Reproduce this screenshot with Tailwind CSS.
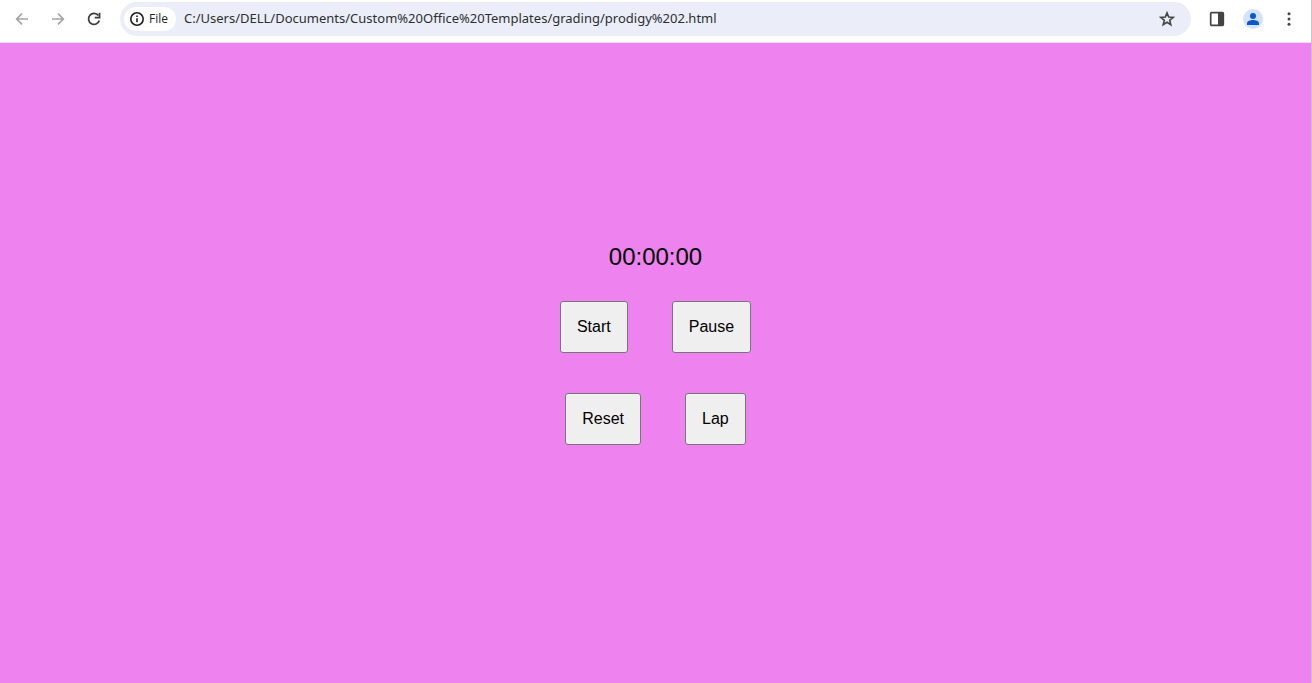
<!DOCTYPE html>
<html lang="en">
<head>
<meta charset="utf-8">
<meta name="viewport" content="width=device-width, initial-scale=1">
<title>Stopwatch</title>
<script src="https://cdn.jsdelivr.net/npm/@tailwindcss/browser@4"></script>
</head>
<body class="flex min-h-screen flex-col border-r border-[#c8c3ca] bg-white font-['Liberation_Sans',Arial,sans-serif] text-black">
  <header class="flex items-center border-b border-[#e9dcec] pt-0.5 pr-3 pb-1.5 pl-3">
    <nav class="flex gap-4" aria-label="Browser navigation">
      <button type="button" aria-label="Back" class="size-5 text-[#a5a5a5]">
        <svg viewBox="0 0 20 20" class="size-5" fill="none" stroke="currentColor" stroke-width="1.7"><path d="M16 10H5M10 4.7 4.7 10l5.300 5.300"/></svg>
      </button>
      <button type="button" aria-label="Forward" class="size-5 text-[#a5a5a5]">
        <svg viewBox="0 0 20 20" class="size-5" fill="none" stroke="currentColor" stroke-width="1.7"><path d="M4 10h11M10 4.700 15.300 10 10 15.300"/></svg>
      </button>
      <button type="button" aria-label="Reload" class="size-5 text-[#3c3c3c]">
        <svg viewBox="0 0 20 20" class="size-5" fill="none" stroke="currentColor" stroke-width="1.8"><path d="M14.400 6.500A5.500 5.500 0 1 0 15.300 11.500"/><path d="M15.500 3.800v4.800h-4.800"/></svg>
      </button>
    </nav>
    <div class="ml-4 flex h-[34px] min-w-0 flex-1 items-center rounded-full bg-[#ebeef8] pr-3.5 pl-1">
      <button type="button" class="flex h-6 shrink-0 items-center gap-[3px] rounded-full bg-white pr-2 pl-1 font-['Open_Sans',sans-serif] text-xs font-medium text-[#1f1f1f]">
        <svg viewBox="0 0 18 18" class="size-[18px]" fill="none" stroke="currentColor" stroke-width="1.6"><circle cx="9" cy="9" r="6.200"/><path d="M9 8.200v4M9 5.400v1.600"/></svg>
        File
      </button>
      <input type="text" aria-label="Address" value="C:/Users/DELL/Documents/Custom%20Office%20Templates/grading/prodigy%202.html" class="ml-2 min-w-0 flex-1 bg-transparent font-['Noto_Sans',sans-serif] text-[13px] text-[#2c2e33] outline-none">
      <button type="button" aria-label="Bookmark this page" class="size-5 text-[#444746]">
        <svg viewBox="0 0 20 20" class="size-5" fill="none" stroke="currentColor" stroke-width="1.600"><path d="M10 3.900 11.700 8.100 16.200 8.400 12.700 11.300 13.800 15.700 10 13.300 6.200 15.700 7.300 11.300 3.800 8.400 8.300 8.100Z"/></svg>
      </button>
    </div>
    <div class="ml-4 flex items-center gap-4">
      <button type="button" aria-label="Side panel" class="size-5 text-[#444444]">
        <svg viewBox="0 0 20 20" class="size-5" fill="none" stroke="currentColor" stroke-width="1.700"><rect x="3.700" y="3.700" width="12.600" height="12.600" rx="0.800"/><path d="M11 3.700h5.300v12.600H11z" fill="currentColor" stroke="none"/></svg>
      </button>
      <button type="button" aria-label="Profile" class="size-5 rounded-full bg-[#d3e3fd] text-[#0b57d0]">
        <svg viewBox="0 0 20 20" class="size-5" fill="currentColor"><circle cx="10" cy="7" r="3"/><path d="M4 16v-1.800c0-2 3.500-3.200 6-3.200s6 1.200 6 3.200V16z"/></svg>
      </button>
      <button type="button" aria-label="Menu" class="size-5 text-[#444444]">
        <svg viewBox="0 0 20 20" class="size-5" fill="currentColor"><circle cx="10" cy="4.700" r="1.500"/><circle cx="10" cy="10" r="1.500"/><circle cx="10" cy="15.300" r="1.500"/></svg>
      </button>
    </div>
  </header>
  <main class="flex flex-1 flex-col items-center bg-[#ee82ee] pt-[200px]">
    <div role="timer" class="text-2xl leading-7">00:00:00</div>
    <div class="mt-[30px] flex gap-11">
      <button type="button" class="h-[52px] rounded-[3px] border border-[#767676] bg-[#efefef] px-4 text-base">Start</button>
      <button type="button" class="h-[52px] rounded-[3px] border border-[#767676] bg-[#efefef] px-4 text-base">Pause</button>
    </div>
    <div class="mt-10 flex gap-11">
      <button type="button" class="h-[52px] rounded-[3px] border border-[#767676] bg-[#efefef] px-4 text-base">Reset</button>
      <button type="button" class="h-[52px] rounded-[3px] border border-[#767676] bg-[#efefef] px-4 text-base">Lap</button>
    </div>
  </main>
</body>
</html>
